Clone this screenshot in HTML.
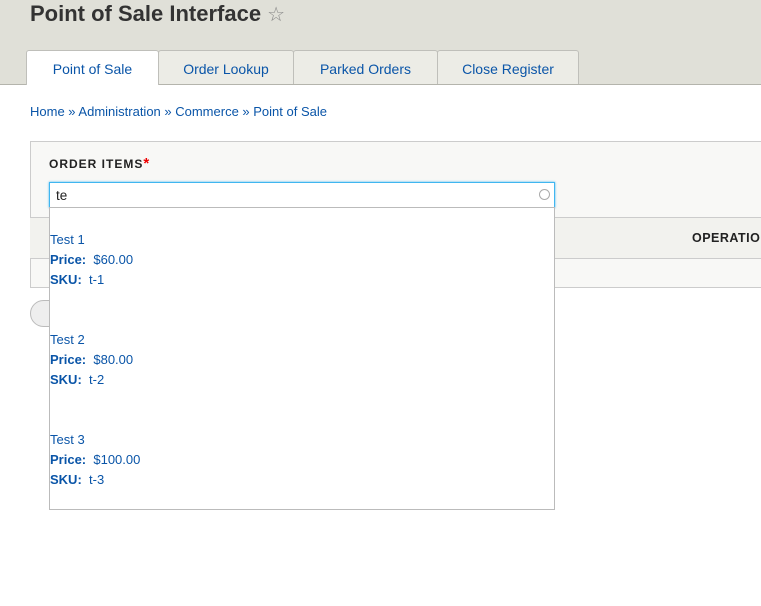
<!DOCTYPE html><html><head><style>
body{margin:0;width:761px;height:606px;overflow:hidden;background:#fff;font-family:"Liberation Sans",sans-serif;position:relative}
.hdr{position:absolute;left:0;top:0;width:761px;height:84px;background:#e0e0d8;border-bottom:1px solid #b4b4ac}
h1{position:absolute;left:30px;top:1px;margin:0;font-size:22px;font-weight:bold;color:#333}
.star{color:#888;font-weight:normal;font-size:20px}
.tab{position:absolute;top:50px;height:34px;background:#ecece6;border:1px solid #bfbfba;border-bottom:none;box-sizing:border-box;color:#0a55a8;font-size:14px;text-align:center;line-height:36px;border-radius:3px 3px 0 0}
.a{position:absolute;color:#0a55a8;font-size:13px}
.fs{position:absolute;left:30px;top:141px;width:740px;height:147px;border:1px solid #ccc;background:#f8f8f6;box-sizing:border-box}
.th{position:absolute;left:30px;top:217px;width:740px;height:42px;background:#f2f2ee;border-top:1px solid #ccc;border-bottom:1px solid #ccc;box-sizing:border-box}
.dd{position:absolute;left:49px;top:207px;width:506px;height:303px;background:#fff;border:1px solid #bbb;box-sizing:border-box}
.it{position:absolute;left:50px;font-size:13px;color:#0a55a8;line-height:20px}
b{color:#0a55a8}
</style></head><body>
<div class="hdr"></div>
<h1>Point of Sale Interface <span class="star">☆</span></h1>
<div class="tab" style="left:26px;width:133px;background:#fff;height:35px">Point of Sale</div>
<div class="tab" style="left:158px;width:136px">Order Lookup</div>
<div class="tab" style="left:293px;width:145px">Parked Orders</div>
<div class="tab" style="left:437px;width:142px">Close Register</div>
<div class="a" style="left:30px;top:104px">Home » Administration » Commerce » Point of Sale</div>
<div class="fs"></div>
<div style="position:absolute;left:49px;top:155px;font-size:12px;font-weight:bold;letter-spacing:1px;color:#222">ORDER ITEMS<span style="color:#e00;font-size:15px">*</span></div>
<div class="th"><span style="position:absolute;left:662px;top:13px;font-size:12.5px;font-weight:bold;letter-spacing:.5px;color:#222">OPERATIO</span></div>
<div style="position:absolute;left:30px;top:300px;width:40px;height:27px;border:1px solid #bbb;border-radius:14px;background:#eee;box-sizing:border-box"></div>
<div style="position:absolute;left:49px;top:182px;width:506px;height:26px;border:1px solid #40b6f0;box-shadow:0 0 2px #40b6f0;box-sizing:border-box;background:#fff;font-size:13.5px;padding:5px 0 0 6px;color:#222">te<span style="position:absolute;right:4px;top:6px;width:9px;height:9px;border:1.5px solid #aaa;border-radius:50%"></span></div>
<div class="dd"></div>
<div class="it" style="top:230px">Test 1<br><b>Price:</b>&nbsp; $60.00<br><b>SKU:</b>&nbsp; t-1</div>
<div class="it" style="top:330px">Test 2<br><b>Price:</b>&nbsp; $80.00<br><b>SKU:</b>&nbsp; t-2</div>
<div class="it" style="top:430px">Test 3<br><b>Price:</b>&nbsp; $100.00<br><b>SKU:</b>&nbsp; t-3</div>
</body></html>
